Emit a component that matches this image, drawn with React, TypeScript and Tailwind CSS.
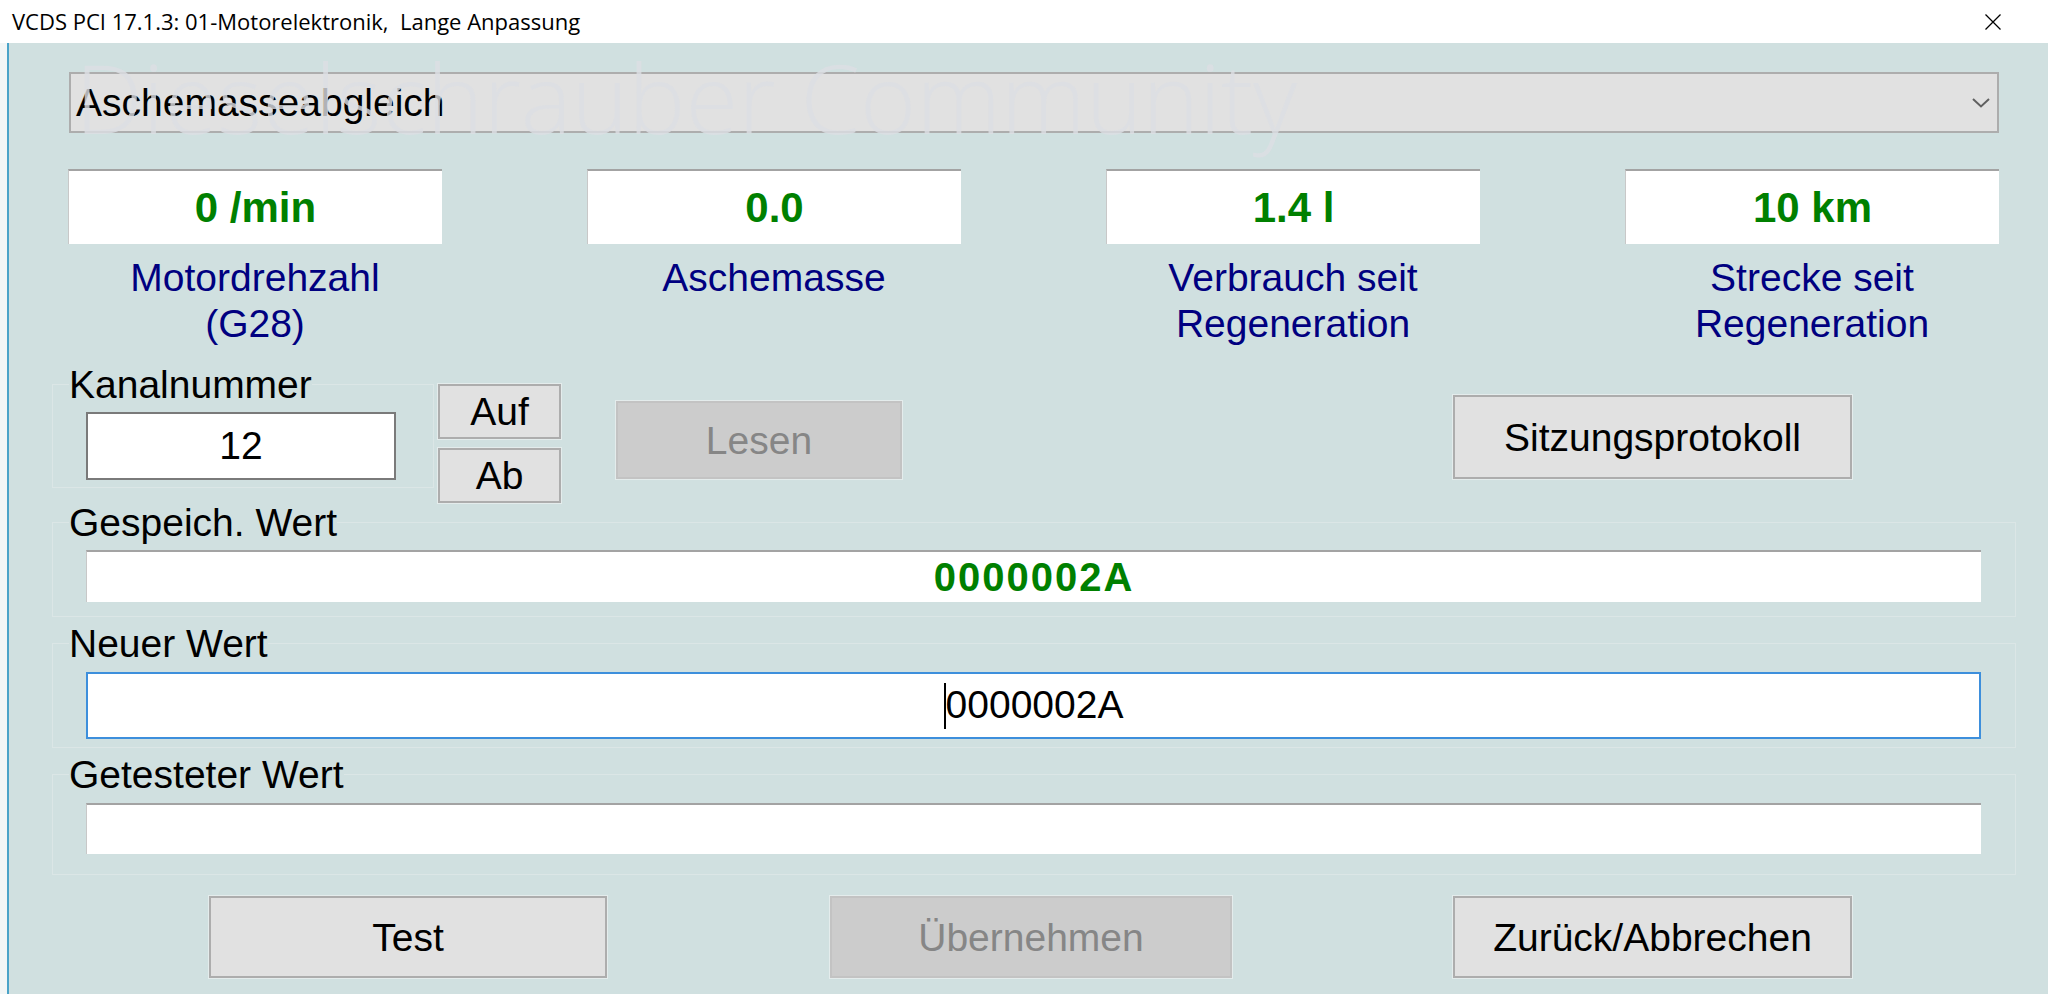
import React from 'react';

const SANS = "font-['Liberation_Sans',Arial,sans-serif]";

const Btn = ({ label, className, disabled }: { label: string; className?: string; disabled?: boolean }) => (
  <button
    className={`flex items-center justify-center border-2 text-[39px] leading-none ring-1 ring-[#e4ecec] ${
      disabled ? 'bg-[#cccccc] border-[#c3c3c3] text-[#868686]' : 'bg-[#e1e1e1] border-[#adadad] text-black'
    } ${className ?? ''}`}
  >
    {label}
  </button>
);

const Readout = ({ value, lines }: { value: string; lines: string[] }) => (
  <div className="flex flex-col items-center">
    <div className="w-[374px] h-[75px] bg-white border-t-2 border-t-[#a3a3a3] border-l border-l-[#c8c8c8] flex items-center justify-center text-[42px] font-bold text-[#008000]">
      {value}
    </div>
    <div className="mt-[11px] text-center text-[39px] leading-[46px] text-[#000080]">
      {lines.map((l) => (
        <div key={l}>{l}</div>
      ))}
    </div>
  </div>
);

const Group = ({ label, className, children }: { label: string; className?: string; children: React.ReactNode }) => (
  <div className={`border border-[#dbe6e6] flex flex-col ${className ?? ''}`}>
    <span className="-mt-[22px] ml-[16px] self-start bg-[#d0e0e0] text-[39px] leading-[44px] text-black">{label}</span>
    {children}
  </div>
);

export default function App() {
  return (
    <div className={`w-[2048px] h-[994px] bg-white flex flex-col overflow-hidden ${SANS}`}>
      {/* title bar */}
      <div className="h-[43px] shrink-0 flex items-center justify-between pl-[12px] pr-[47px]">
        <span className="font-['Open_Sans',sans-serif] text-[22px] text-black whitespace-pre">
          VCDS PCI 17.1.3: 01-Motorelektronik,  Lange Anpassung
        </span>
        <svg width="16" height="16" viewBox="0 0 16 16" className="text-black">
          <path d="M0.5 0.5 L15.5 15.5 M15.5 0.5 L0.5 15.5" stroke="currentColor" strokeWidth="1.3" />
        </svg>
      </div>

      <div className="flex-1 flex">
        <div className="w-[7px] bg-[#f2f6f6]" />
        <div className="w-[2px] bg-[#4aa3c8]" />
        <div className="relative flex-1 bg-[#d0e0e0] pl-[43px] pt-[29px] flex flex-col">
          {/* combo box */}
          <div className="ml-[17px] w-[1930px] h-[61px] bg-[#e1e1e1] border-2 border-[#adadad] flex items-center justify-between pl-[5px] pr-[7px]">
            <span className="text-[39px] text-black leading-none">Aschemasseabgleich</span>
            <svg width="18" height="10" viewBox="0 0 18 10">
              <path d="M1 1 L9 8.5 L17 1" fill="none" stroke="#606060" strokeWidth="2" />
            </svg>
          </div>

          {/* readouts */}
          <div className="mt-[36px] ml-[16px] grid grid-cols-4 w-fit gap-x-[145px]">
            <Readout value="0 /min" lines={['Motordrehzahl', '(G28)']} />
            <Readout value="0.0" lines={['Aschemasse']} />
            <Readout value="1.4 l" lines={['Verbrauch seit', 'Regeneration']} />
            <Readout value="10 km" lines={['Strecke seit', 'Regeneration']} />
          </div>

          {/* channel row */}
          <div className="mt-[37px] flex items-start">
            <Group label="Kanalnummer" className="w-[382px]">
              <div className="ml-[33px] mt-[5px] mb-[7px] w-[310px] h-[68px] bg-white border-2 border-[#7a7a7a] flex items-center justify-center text-[39px] text-black">
                12
              </div>
            </Group>
            <div className="ml-[4px] flex flex-col gap-[9px]">
              <Btn label="Auf" className="w-[123px] h-[55px]" />
              <Btn label="Ab" className="w-[123px] h-[55px]" />
            </div>
            <Btn label="Lesen" disabled className="ml-[55px] mt-[17px] w-[286px] h-[78px]" />
            <Btn label="Sitzungsprotokoll" className="ml-[551px] mt-[11px] w-[399px] h-[84px]" />
          </div>

          <Group label="Gespeich. Wert" className="mt-[19px] w-[1964px]">
            <div className="ml-[33px] mt-[5px] mb-[14px] w-[1895px] h-[52px] bg-white border-t-2 border-t-[#a3a3a3] border-l border-l-[#c8c8c8] flex items-center justify-center text-[40px] font-bold tracking-[2px] text-[#008000]">
              0000002A
            </div>
          </Group>

          <Group label="Neuer Wert" className="mt-[26px] w-[1964px]">
            <div className="ml-[33px] mt-[6px] mb-[8px] w-[1895px] h-[67px] bg-white border-2 border-[#3d8fdc] flex items-center justify-center text-[39px] text-black">
              <span className="inline-block w-[2px] h-[46px] bg-black" />
              <span>0000002A</span>
            </div>
          </Group>

          <Group label="Getesteter Wert" className="mt-[26px] w-[1964px]">
            <div className="ml-[33px] mt-[6px] mb-[20px] w-[1895px] h-[51px] bg-white border-t-2 border-t-[#a3a3a3] border-l border-l-[#c8c8c8]" />
          </Group>

          {/* bottom buttons */}
          <div className="mt-[21px] flex">
            <Btn label="Test" className="ml-[157px] w-[398px] h-[82px]" />
            <Btn label="Übernehmen" disabled className="ml-[223px] w-[402px] h-[82px]" />
            <Btn label="Zurück/Abbrechen" className="ml-[221px] w-[399px] h-[82px]" />
          </div>

          {/* forum watermark */}
          <div className="pointer-events-none absolute left-[66px] top-[6px] z-10 font-['Open_Sans',sans-serif] font-light text-[96px] leading-none whitespace-nowrap text-[rgba(220,223,227,0.8)]">
            Dieselschrauber Community
          </div>
        </div>
      </div>
    </div>
  );
}
